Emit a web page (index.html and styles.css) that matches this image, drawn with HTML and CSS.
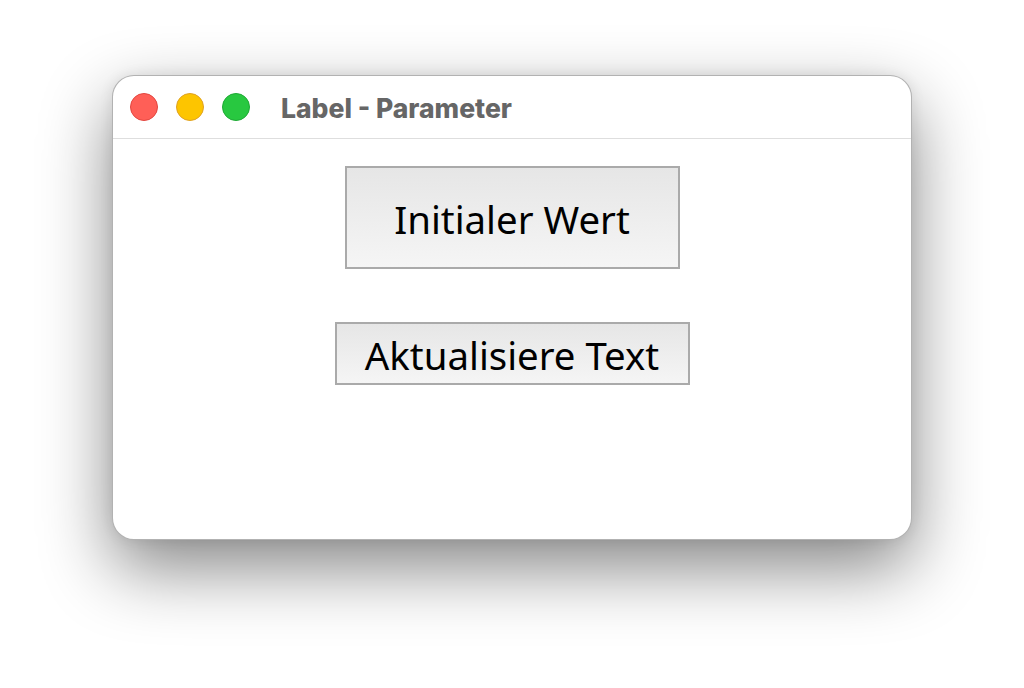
FILE: index.html
```html
<!DOCTYPE html>
<html lang="de">
<head>
    <meta charset="UTF-8">
    <title>Label - Parameter</title>
    <link rel="stylesheet" href="styles.css">
</head>
<body>
    <div class="desktop">
        <div class="window">
            <div class="titlebar">
                <div class="lights">
                    <span class="light close"></span>
                    <span class="light minimize"></span>
                    <span class="light zoom"></span>
                </div>
                <span class="title">Label - Parameter</span>
            </div>
            <div class="content">
                <div class="label-box">Initialer Wert</div>
                <button class="action">Aktualisiere Text</button>
            </div>
        </div>
    </div>
</body>
</html>
```

FILE: styles.css
```css
body {
    margin: 0;
    background-color: #fff;
    font-family: "Noto Sans", sans-serif;
}

.desktop {
    height: 688px;
    padding-top: 75px;
    box-sizing: border-box;
    display: flex;
    justify-content: center;
    align-items: flex-start;
}

.window {
    width: 800px;
    height: 465px;
    box-sizing: border-box;
    background-color: #fff;
    border: 1px solid rgba(0, 0, 0, 0.3);
    border-radius: 22px;
    box-shadow: 0 28px 70px rgba(0, 0, 0, 0.48), 0 0 14px rgba(0, 0, 0, 0.08);
    overflow: hidden;
}

.titlebar {
    display: flex;
    align-items: center;
    height: 62px;
    border-bottom: 1px solid #dedede;
    padding-left: 17px;
}

.lights {
    display: flex;
    gap: 18px;
}

.light {
    width: 28px;
    height: 28px;
    border-radius: 50%;
    box-sizing: border-box;
}

.close {
    background-color: #ff5f57;
    border: 1px solid #e2463f;
}

.minimize {
    background-color: #fdc500;
    border: 1px solid #dfa123;
}

.zoom {
    background-color: #28c840;
    border: 1px solid #1ea934;
}

.title {
    margin-left: 31px;
    margin-top: 2px;
    font-family: Inter, "Liberation Sans", sans-serif;
    font-weight: 800;
    font-size: 26.5px;
    color: #666;
}

.content {
    display: flex;
    flex-direction: column;
    align-items: center;
    gap: 53px;
    padding-top: 27px;
}

.label-box,
.action {
    box-sizing: border-box;
    border: 2px solid #aaa;
    background: linear-gradient(#e6e6e6, #f5f5f5);
    color: #000;
    font-family: "Noto Sans", sans-serif;
    font-size: 38.4px;
}

.label-box {
    width: 335px;
    height: 103px;
    padding-top: 2px;
    display: flex;
    align-items: center;
    justify-content: center;
}

.action {
    width: 355px;
    height: 63px;
    padding: 3px 0 0;
    line-height: 1;
}
```
